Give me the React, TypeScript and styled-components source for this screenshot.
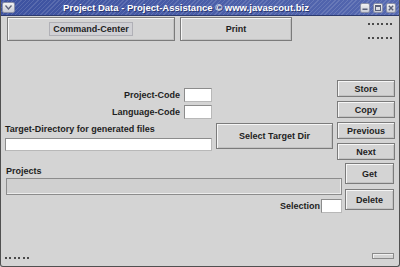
import React from 'react';
import styled, {createGlobalStyle} from "styled-components";

const GlobalStyle = createGlobalStyle`
html, body {
margin: 0;
padding: 0;
background: #d4d4d4;
}
* {
box-sizing: border-box;
}`;

const Window = styled.div`
width: 400px;
height: 267px;
display: flex;
flex-direction: column;
background: #d4d4d4;
border: 1px solid #505050;
border-top: none;
border-radius: 0 0 3px 3px;
font-family: "Liberation Sans", Arial, sans-serif;
overflow: hidden;`;

const TitleBar = styled.div`
height: 16px;
flex: none;
display: flex;
align-items: center;
padding: 0 3px 0 0;
border-bottom: 1px solid #2c3a6e;
background:
  repeating-linear-gradient(135deg, rgba(255,255,255,0) 0 2px, rgba(255,255,255,0.13) 2px 3px),
  linear-gradient(90deg, #3d52a0, #5568b0);`;

const TitleText = styled.div`
flex: 1;
text-align: center;
color: #ffffff;
font-size: 9.5px;
font-weight: bold;
white-space: nowrap;
text-shadow: 1px 1px 0 #2a3770;`;

const TitleButton = styled.div<{wide?: boolean}>`
width: ${(props) => props.wide ? '13px' : '10px'};
height: ${(props) => props.wide ? '11px' : '10px'};
margin-left: ${(props) => props.wide ? '1px' : '3px'};
background: linear-gradient(#f2f2f2, #c8cbd6);
border: 1px solid #8a90a8;
border-radius: 2px;
display: flex;
align-items: center;
justify-content: center;
flex: none;`;

const Body = styled.div`
flex: 1;
display: flex;
flex-direction: column;`;

const TopRow = styled.div`
display: flex;
align-items: flex-start;
padding: 1px 7px 0 6px;
gap: 5px;`;

const Button = styled.div<{w: number; h: number}>`
width: ${(props) => props.w}px;
height: ${(props) => props.h}px;
flex: none;
display: flex;
align-items: center;
justify-content: center;
border: 1px solid #7b7b7b;
box-shadow: inset 1px 1px 0 #f6f6f6, inset -1px -1px 0 #c2c2c2;
background: #d4d4d4;
font-size: 9px;
font-weight: bold;
color: #1e1e1e;
white-space: nowrap;`;

const FocusBox = styled.span`
padding: 1px 3px;
border: 1px solid #b0b0b6;
background: #d0d0d4;`;

const Dots = styled.div<{top?: number}>`
width: 24px;
height: 2px;
margin-top: ${(props) => props.top ?? 0}px;
background: repeating-linear-gradient(90deg, #4a4a4a 0 2px, transparent 2px 4.4px);`;

const DotsColumn = styled.div`
margin-left: auto;
display: flex;
flex-direction: column;
padding-top: 6px;`;

const SectionA = styled.div`
display: flex;
gap: 4px;
padding: 0 4px;
margin-top: 39px;`;

const SectionB = styled.div`
display: flex;
gap: 3px;
padding: 0 5px;
margin-top: 3px;`;

const LeftPane = styled.div`
flex: 1;
display: flex;
flex-direction: column;`;

const ButtonColumn = styled.div<{gap: number}>`
display: flex;
flex-direction: column;
gap: ${(props) => props.gap}px;`;

const CodeRow = styled.div<{top: number}>`
width: 207px;
display: flex;
justify-content: flex-end;
align-items: center;
gap: 4px;
margin-top: ${(props) => props.top}px;`;

const Label = styled.div<{top?: number}>`
font-size: 9px;
font-weight: bold;
color: #1e1e1e;
line-height: 12px;
white-space: nowrap;
margin-top: ${(props) => props.top ?? 0}px;`;

const TextField = styled.div<{w: number; h: number}>`
width: ${(props) => props.w}px;
height: ${(props) => props.h}px;
flex: none;
background: #ffffff;
border: 1px solid #8c8c8c;
border-right-color: #b8b8b8;
border-bottom-color: #b8b8b8;`;

const ListField = styled.div`
height: 17px;
margin-top: 1px;
background: #d0d0d0;
border: 1px solid #8c8c8c;
box-shadow: inset -1px -1px 0 #ececec;`;

const TargetRow = styled.div`
display: flex;
gap: 4px;
margin-top: 4px;`;

const TargetField = styled.div`
width: 207px;
display: flex;
flex-direction: column;
gap: 3px;`;

const SelectionRow = styled.div`
display: flex;
justify-content: flex-end;
align-items: center;
gap: 1px;
margin-top: 4px;`;

const Footer = styled.div`
margin-top: auto;
display: flex;
align-items: flex-end;
justify-content: space-between;
padding: 0 5px 7px 4px;`;

const Grip = styled.div`
width: 22px;
height: 6px;
border: 1px solid #8a8a8a;
box-shadow: inset 1px 1px 0 #f0f0f0;`;

const App = () => {
    return (
        <>
            <GlobalStyle/>
            <Window>
                <TitleBar>
                    <TitleButton wide>
                        <svg width="7" height="5" viewBox="0 0 7 5">
                            <path d="M0.5 0.5 L3.5 4 L6.5 0.5" fill="none" stroke="#5a6078" strokeWidth="1.3"/>
                        </svg>
                    </TitleButton>
                    <TitleText>Project Data - Project-Assistance © www.javascout.biz</TitleText>
                    <TitleButton>
                        <svg width="6" height="6" viewBox="0 0 6 6">
                            <rect x="0.5" y="3.5" width="5" height="1.5" fill="#5a6078"/>
                        </svg>
                    </TitleButton>
                    <TitleButton>
                        <svg width="6" height="6" viewBox="0 0 6 6">
                            <rect x="0.5" y="0.5" width="5" height="5" fill="none" stroke="#5a6078"/>
                            <rect x="0.5" y="0.5" width="5" height="1.5" fill="#5a6078"/>
                        </svg>
                    </TitleButton>
                    <TitleButton>
                        <svg width="6" height="6" viewBox="0 0 6 6">
                            <path d="M0.8 0.8 L5.2 5.2 M5.2 0.8 L0.8 5.2" stroke="#5a6078" strokeWidth="1.4"/>
                        </svg>
                    </TitleButton>
                </TitleBar>
                <Body>
                    <TopRow>
                        <Button w={168} h={24}><FocusBox>Command-Center</FocusBox></Button>
                        <Button w={112} h={24}>Print</Button>
                        <DotsColumn>
                            <Dots/>
                            <Dots top={12}/>
                        </DotsColumn>
                    </TopRow>
                    <SectionA>
                        <LeftPane>
                            <CodeRow top={8}>
                                <Label>Project-Code</Label>
                                <TextField w={28} h={14}/>
                            </CodeRow>
                            <CodeRow top={3}>
                                <Label>Language-Code</Label>
                                <TextField w={28} h={14}/>
                            </CodeRow>
                            <TargetRow>
                                <TargetField>
                                    <Label>Target-Directory for generated files</Label>
                                    <TextField w={207} h={13}/>
                                </TargetField>
                                <Button w={117} h={26}>Select Target Dir</Button>
                            </TargetRow>
                        </LeftPane>
                        <ButtonColumn gap={4}>
                            <Button w={58} h={17}>Store</Button>
                            <Button w={58} h={17}>Copy</Button>
                            <Button w={58} h={17}>Previous</Button>
                            <Button w={58} h={17}>Next</Button>
                        </ButtonColumn>
                    </SectionA>
                    <SectionB>
                        <LeftPane>
                            <Label top={2}>Projects</Label>
                            <ListField/>
                            <SelectionRow>
                                <Label>Selection</Label>
                                <TextField w={21} h={14}/>
                            </SelectionRow>
                        </LeftPane>
                        <ButtonColumn gap={5}>
                            <Button w={49} h={21}>Get</Button>
                            <Button w={49} h={21}>Delete</Button>
                        </ButtonColumn>
                    </SectionB>
                    <Footer>
                        <Dots top={0}/>
                        <Grip/>
                    </Footer>
                </Body>
            </Window>
        </>
    );
};

export default App;
